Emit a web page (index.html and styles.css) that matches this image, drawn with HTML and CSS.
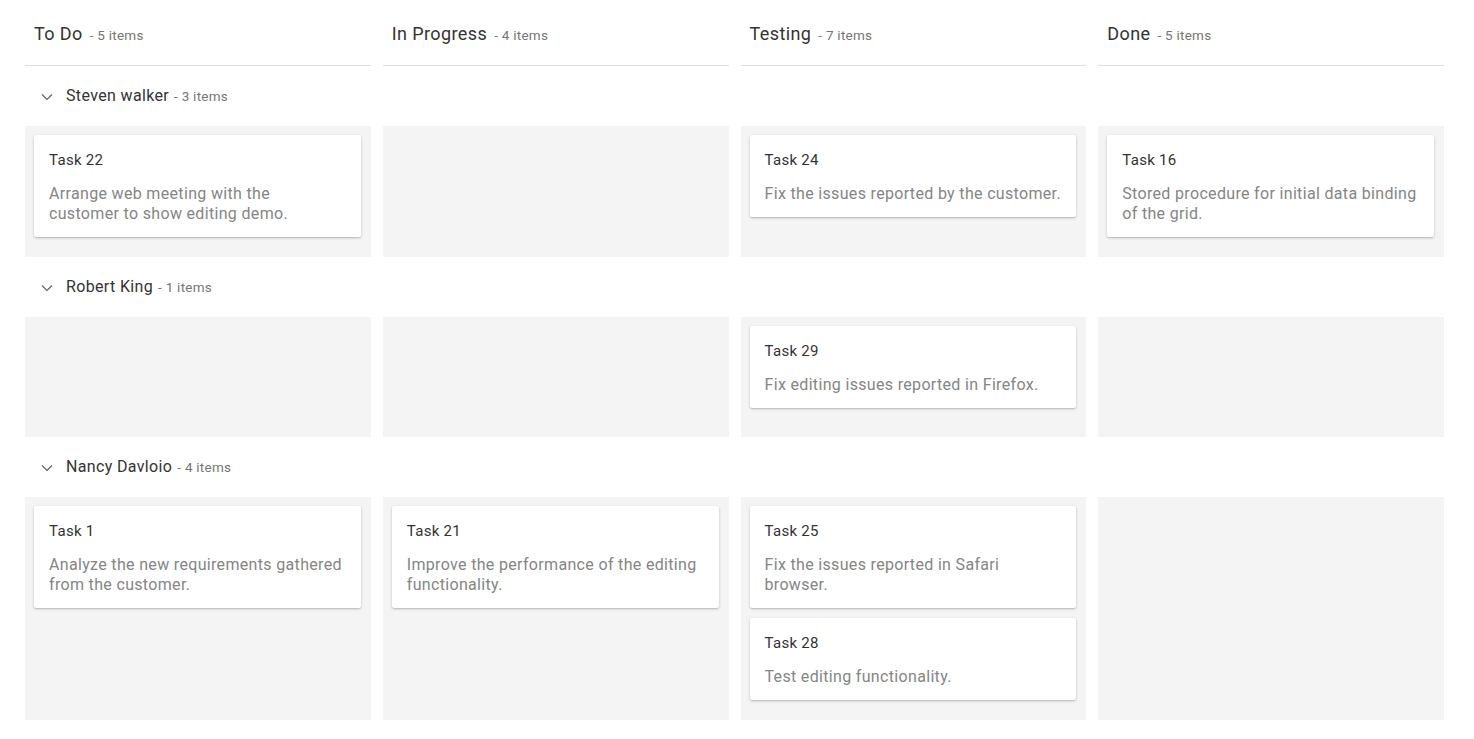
FILE: index.html
```html
<!DOCTYPE html>
<html>
<head>
<meta charset="utf-8">
<link rel="stylesheet" href="styles.css">
</head>
<body>
<div class="board">
  <div class="columns">
    <div class="col-head"><span class="col-title">To Do</span><span class="count">- 5 items</span></div>
    <div class="col-head"><span class="col-title">In Progress</span><span class="count">- 4 items</span></div>
    <div class="col-head"><span class="col-title">Testing</span><span class="count">- 7 items</span></div>
    <div class="col-head"><span class="col-title">Done</span><span class="count">- 5 items</span></div>
  </div>

  <div class="lane-head">
    <svg class="chev" width="12" height="8" viewBox="0 0 12 8"><path d="M1 1.5 L6 6.5 L11 1.5" fill="none" stroke="#616161" stroke-width="1.2"/></svg>
    <span class="lane-name">Steven walker</span><span class="count">- 3 items</span>
  </div>
  <div class="lane">
    <div class="cell">
      <div class="card"><div class="card-title">Task 22</div><div class="card-desc">Arrange web meeting with the<br>customer to show editing demo.</div></div>
    </div>
    <div class="cell"></div>
    <div class="cell">
      <div class="card"><div class="card-title">Task 24</div><div class="card-desc">Fix the issues reported by the customer.</div></div>
    </div>
    <div class="cell">
      <div class="card"><div class="card-title">Task 16</div><div class="card-desc">Stored procedure for initial data binding of the grid.</div></div>
    </div>
  </div>

  <div class="lane-head">
    <svg class="chev" width="12" height="8" viewBox="0 0 12 8"><path d="M1 1.5 L6 6.5 L11 1.5" fill="none" stroke="#616161" stroke-width="1.2"/></svg>
    <span class="lane-name">Robert King</span><span class="count">- 1 items</span>
  </div>
  <div class="lane">
    <div class="cell"></div>
    <div class="cell"></div>
    <div class="cell">
      <div class="card"><div class="card-title">Task 29</div><div class="card-desc">Fix editing issues reported in Firefox.</div></div>
    </div>
    <div class="cell"></div>
  </div>

  <div class="lane-head">
    <svg class="chev" width="12" height="8" viewBox="0 0 12 8"><path d="M1 1.5 L6 6.5 L11 1.5" fill="none" stroke="#616161" stroke-width="1.2"/></svg>
    <span class="lane-name">Nancy Davloio</span><span class="count">- 4 items</span>
  </div>
  <div class="lane">
    <div class="cell">
      <div class="card"><div class="card-title">Task 1</div><div class="card-desc">Analyze the new requirements gathered from the customer.</div></div>
    </div>
    <div class="cell">
      <div class="card"><div class="card-title">Task 21</div><div class="card-desc">Improve the performance of the editing functionality.</div></div>
    </div>
    <div class="cell">
      <div class="card"><div class="card-title">Task 25</div><div class="card-desc">Fix the issues reported in Safari browser.</div></div>
      <div class="card"><div class="card-title">Task 28</div><div class="card-desc">Test editing functionality.</div></div>
    </div>
    <div class="cell"></div>
  </div>
</div>
</body>
</html>
```

FILE: styles.css
```css
html, body {
  margin: 0;
  padding: 0;
  background: #ffffff;
}
body {
  font-family: Roboto, "Liberation Sans", sans-serif;
  color: #212121;
}
.board {
  padding: 0 30px 0 25px;
}
.columns, .lane {
  display: grid;
  grid-template-columns: repeat(4, 1fr);
  column-gap: 12px;
}
.col-head {
  display: flex;
  align-items: baseline;
  gap: 7px;
  height: 66px;
  box-sizing: border-box;
  padding: 22px 9px 0;
  line-height: 24px;
  border-bottom: 1px solid #e0e0e0;
  white-space: nowrap;
}
.col-title {
  font-size: 18px;
  letter-spacing: 0.4px;
  color: #333333;
}
.count {
  font-size: 13.5px;
  letter-spacing: 0.25px;
  color: #757575;
}
.lane-head {
  display: flex;
  align-items: baseline;
  height: 60px;
  box-sizing: border-box;
  padding: 20px 0 0 16px;
  line-height: 20px;
}
.chev {
  display: block;
  align-self: flex-start;
  margin: 7px 13px 0 0;
}
.lane-name {
  font-size: 16px;
  letter-spacing: 0.35px;
  color: #333333;
  margin-right: 5px;
  white-space: pre;
}
.lane-head .count {
  white-space: pre;
}
.cell {
  background: #f4f4f4;
  min-height: 120px;
  box-sizing: border-box;
  padding: 9px 10px 10px 9px;
}
.card {
  background: #ffffff;
  border-radius: 2px;
  box-shadow: 0 1px 3px rgba(0, 0, 0, 0.2), 0 1px 1px rgba(0, 0, 0, 0.08);
  padding: 15px 15px 13px;
  margin-bottom: 10px;
}
.card-title {
  font-size: 15px;
  letter-spacing: 0.3px;
  line-height: 20px;
  color: #333333;
}
.card-desc {
  margin-top: 14px;
  font-size: 16px;
  letter-spacing: 0.33px;
  line-height: 20px;
  color: #858585;
}
```
